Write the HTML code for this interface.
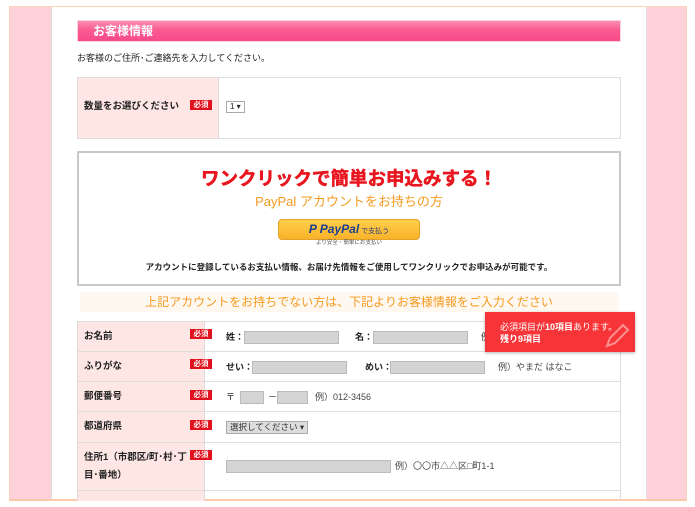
<!DOCTYPE html>
<html><head><meta charset="utf-8"><style>
*{margin:0;padding:0;box-sizing:border-box}
body{width:695px;height:507px;background:#fff;font-family:"Liberation Sans","Noto Sans CJK JP",sans-serif;font-size:9px;color:#222;position:relative;overflow:hidden;line-height:1.2}
.a{position:absolute}
.badge{position:absolute;background:#e0101c;color:#fff;font-size:7.5px;font-weight:bold;width:22px;text-align:center;height:10px;line-height:10px}
.inp{position:absolute;height:13px;background:#d4d4d4;border:1px solid #bbb}
.lbl{position:absolute;left:84px;font-weight:bold;font-size:9.5px;line-height:12px}
</style></head><body>
<div class="a" style="left:9px;top:6px;width:678px;height:495px;border:1px solid #fcd3b5;border-bottom:2px solid #fcc9a8;background:#ffd1d8"></div>
<div class="a" style="left:51px;top:7px;width:596px;height:492px;background:#fff;border-left:1px solid #ddd;border-right:1px solid #ddd"></div>
<div class="a" style="left:77px;top:20px;width:544px;height:22px;background:linear-gradient(#f98db1,#fb5b92 45%,#f9498a);border:1px solid #fbd2df"></div>
<div class="a" style="left:93px;top:24px;color:#fff;font-weight:bold;font-size:12px">お客様情報</div>
<div class="a" style="left:77px;top:53px;font-size:9px">お客様のご住所･ご連絡先を入力してください。</div>
<div class="a" style="left:77px;top:77px;width:544px;height:62px;border:1px solid #ddd"></div>
<div class="a" style="left:78px;top:78px;width:141px;height:60px;background:#fde6e4;border-right:1px solid #ddd"></div>
<div class="lbl" style="top:101px">数量をお選びください</div>
<div class="badge" style="left:190px;top:100px">必須</div>
<div class="a" style="left:226px;top:101px;width:19px;height:12px;border:1px solid #aaa;font-size:8px;line-height:10px;padding-left:3px;background:#fff">1 ▾</div>
<div class="a" style="left:77px;top:151px;width:544px;height:135px;border:2px solid #c8c8c8"></div>
<div class="a" style="left:77px;top:168px;width:544px;text-align:center;color:#e8141e;font-weight:bold;font-size:18.5px;-webkit-text-stroke:0.5px #e8141e">ワンクリックで簡単お申込みする！</div>
<div class="a" style="left:77px;top:194px;width:544px;text-align:center;color:#f59a1f;font-size:13px">PayPal アカウントをお持ちの方</div>
<div class="a" style="left:278px;top:219px;width:142px;height:21px;border-radius:4px;background:linear-gradient(#ffcf4a,#f9b22a);border:1px solid #e3a22a;text-align:center;line-height:19px"><span style="color:#1a3d8f;font-weight:bold;font-style:italic;font-size:12px">P PayPal</span><span style="color:#253b80;font-size:7px"> で支払う</span></div>
<div class="a" style="left:278px;top:240px;width:142px;text-align:center;font-size:5.5px;color:#555">より安全・簡単にお支払い</div>
<div class="a" style="left:77px;top:262px;width:544px;text-align:center;font-weight:bold;font-size:8.5px">アカウントに登録しているお支払い情報、お届け先情報をご使用してワンクリックでお申込みが可能です。</div>
<div class="a" style="left:80px;top:292px;width:538px;height:20px;background:#fff8f0;text-align:center;color:#f59a1f;font-size:12px;line-height:20px">上記アカウントをお持ちでない方は、下記よりお客様情報をご入力ください</div>
<div class="a" style="left:77px;top:321px;width:544px;height:186px;border:1px solid #ddd;border-bottom:none"></div>
<div class="a" style="left:78px;top:322px;width:127px;height:185px;background:#fde6e4;border-right:1px solid #ddd"></div>
<div class="a" style="left:78px;top:351px;width:543px;border-top:1px solid #ddd"></div>
<div class="a" style="left:78px;top:381px;width:543px;border-top:1px solid #ddd"></div>
<div class="a" style="left:78px;top:411px;width:543px;border-top:1px solid #ddd"></div>
<div class="a" style="left:78px;top:442px;width:543px;border-top:1px solid #ddd"></div>
<div class="a" style="left:78px;top:490px;width:543px;border-top:1px solid #ddd"></div>
<div class="lbl" style="top:331px">お名前</div><div class="badge" style="left:190px;top:329px">必須</div>
<div class="lbl" style="top:361px">ふりがな</div><div class="badge" style="left:190px;top:359px">必須</div>
<div class="lbl" style="top:391px">郵便番号</div><div class="badge" style="left:190px;top:390px">必須</div>
<div class="lbl" style="top:421px">都道府県</div><div class="badge" style="left:190px;top:420px">必須</div>
<div class="lbl" style="top:449px;width:106px;line-height:18px">住所1（市郡区/町･村･丁目･番地）</div><div class="badge" style="left:190px;top:450px">必須</div>
<div class="a" style="left:226px;top:332px;font-weight:bold">姓：</div><div class="inp" style="left:244px;top:331px;width:95px"></div>
<div class="a" style="left:355px;top:332px;font-weight:bold">名：</div><div class="inp" style="left:373px;top:331px;width:95px"></div>
<div class="a" style="left:481px;top:332px;color:#444">例）</div>
<div class="a" style="left:226px;top:362px;font-weight:bold">せい：</div><div class="inp" style="left:252px;top:361px;width:95px"></div>
<div class="a" style="left:365px;top:362px;font-weight:bold">めい：</div><div class="inp" style="left:390px;top:361px;width:95px"></div>
<div class="a" style="left:498px;top:362px;color:#444">例）やまだ はなこ</div>
<div class="a" style="left:226px;top:392px">〒</div><div class="inp" style="left:240px;top:391px;width:24px"></div>
<div class="a" style="left:268px;top:392px">－</div><div class="inp" style="left:277px;top:391px;width:31px"></div>
<div class="a" style="left:315px;top:392px;color:#444">例）012-3456</div>
<div class="a" style="left:226px;top:421px;width:82px;height:13px;background:#ddd;border:1px solid #aaa;font-size:8.5px;line-height:11px;padding-left:3px;color:#333">選択してください ▾</div>
<div class="inp" style="left:226px;top:460px;width:165px"></div>
<div class="a" style="left:395px;top:461px;color:#444">例）〇〇市△△区□町1-1</div>
<div class="a" style="left:0;top:501px;width:695px;height:6px;background:#fff"></div>
<div class="a" style="left:485px;top:312px;width:150px;height:40px;background:#f73538;box-shadow:0 1px 3px rgba(0,0,0,.3);color:#fff;font-size:9px;padding:9px 0 0 15px;line-height:12px">必須項目が<b>10項目</b>あります。<br><b>残り9項目</b></div>
<svg class="a" style="left:603px;top:322px" width="28" height="28" viewBox="0 0 28 28"><path d="M4 24 L7 16 L20 3 L25 8 L12 21 Z" fill="none" stroke="#fff" stroke-opacity=".45" stroke-width="2"/></svg>
</body></html>
